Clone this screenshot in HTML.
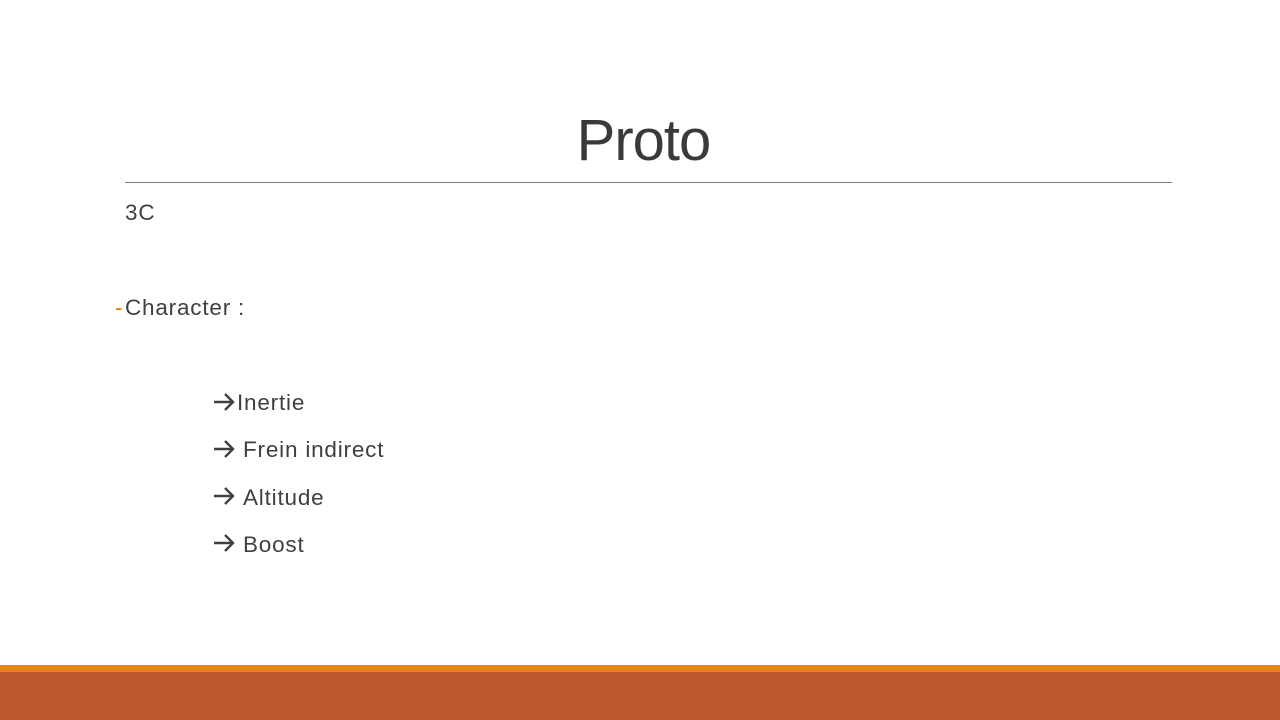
<!DOCTYPE html>
<html><head><style>
body{margin:0;width:1280px;height:720px;background:#fff;position:relative;overflow:hidden;font-family:"Liberation Sans",sans-serif;color:#404040}
.t{position:absolute;font-size:22.5px;line-height:1;white-space:nowrap;letter-spacing:0.8px}
svg{position:absolute}
</style></head><body>
<div class="t" style="left:0;width:1287px;text-align:center;top:112px;font-size:58px;color:#3a3a3a;letter-spacing:-1px">Proto</div>
<div style="position:absolute;left:125px;top:182px;width:1047px;height:1px;background:#7a7a7a"></div>
<div class="t" style="left:125px;top:202px">3C</div>
<div class="t" style="left:115px;top:297px;color:#e07b14">-</div>
<div class="t" style="left:125px;top:297px">Character :</div>
<div class="t" style="left:237px;top:392px">Inertie</div>
<div class="t" style="left:243px;top:439px">Frein indirect</div>
<div class="t" style="left:243px;top:487px">Altitude</div>
<div class="t" style="left:243px;top:534px">Boost</div>
<svg width="1280" height="720" style="left:0;top:0">
<g stroke="#404040" stroke-width="2.4" fill="none">
<path d="M214 402h19M225 394l8 8-8 8"/>
<path d="M214 449h19M225 441l8 8-8 8"/>
<path d="M214 496h19M225 488l8 8-8 8"/>
<path d="M214 543h19M225 535l8 8-8 8"/>
</g></svg>
<div style="position:absolute;left:0;top:665px;width:1280px;height:7px;background:#e28416"></div>
<div style="position:absolute;left:0;top:672px;width:1280px;height:48px;background:#bd582c"></div>
</body></html>
